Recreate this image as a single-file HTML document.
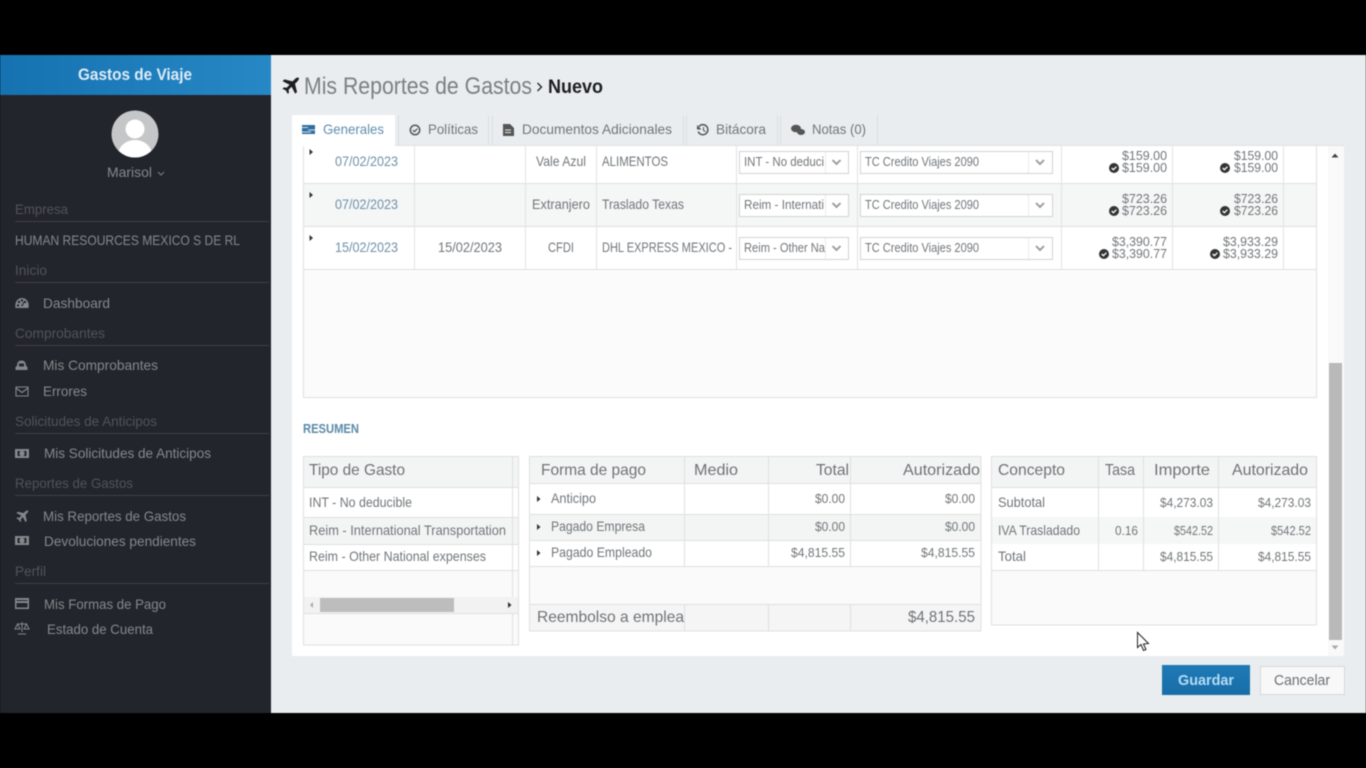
<!DOCTYPE html>
<html lang="es"><head><meta charset="utf-8"><title>Mis Reportes de Gastos</title>
<style>
html,body{margin:0;padding:0;background:#000;width:1366px;height:768px;overflow:hidden}
svg{display:block;filter:blur(.5px)}
text{font-family:"Liberation Sans",sans-serif;font-size:14px;fill:#72767a}
.s text{fill:#85888c}
.h text{fill:#50545a}
.d{fill:#6f91a8}
.t{font-size:16px;fill:#6f7377}
.a{font-size:13px;fill:#72767a}
</style></head><body>
<svg width="1366" height="768" viewBox="0 0 1366 768" xmlns="http://www.w3.org/2000/svg">
<defs>
<linearGradient id="hd" x1="0" x2="1" y1="0" y2="0"><stop offset="0" stop-color="#1672b0"/><stop offset="1" stop-color="#2788c6"/></linearGradient>
<linearGradient id="gb" x1="0" x2="0" y1="0" y2="1"><stop offset="0" stop-color="#1f7ab6"/><stop offset="1" stop-color="#186da7"/></linearGradient>
<clipPath id="av"><circle cx="135" cy="134" r="23.500"/></clipPath>
</defs>
<rect width="1366" height="768" fill="#000"/>
<rect x="270" y="55" width="1096" height="658" fill="#e9edef"/>
<rect x="0" y="55" width="271" height="658" fill="#22252b"/>
<rect x="0" y="55" width="271" height="40" fill="url(#hd)"/>
<text x="78" y="80" textLength="114" lengthAdjust="spacingAndGlyphs" style="font-size:17px;font-weight:bold;fill:#dcebf6">Gastos de Viaje</text>

<circle cx="135" cy="134" r="23.500" fill="#c5c6c7"/>
<g clip-path="url(#av)" fill="#fff"><circle cx="135" cy="129" r="9.500"/><ellipse cx="135" cy="155" rx="17" ry="15"/></g>

<g class="s">
<text x="107" y="177" textLength="45" lengthAdjust="spacingAndGlyphs">Marisol</text>
<text x="15" y="245" textLength="225" lengthAdjust="spacingAndGlyphs">HUMAN RESOURCES MEXICO S DE RL</text>
<text x="43" y="308" textLength="67" lengthAdjust="spacingAndGlyphs">Dashboard</text>
<text x="43" y="370" textLength="115" lengthAdjust="spacingAndGlyphs">Mis Comprobantes</text>
<text x="43" y="396" textLength="44" lengthAdjust="spacingAndGlyphs">Errores</text>
<text x="44" y="458" textLength="167" lengthAdjust="spacingAndGlyphs">Mis Solicitudes de Anticipos</text>
<text x="43" y="521" textLength="143" lengthAdjust="spacingAndGlyphs">Mis Reportes de Gastos</text>
<text x="44" y="546" textLength="152" lengthAdjust="spacingAndGlyphs">Devoluciones pendientes</text>
<text x="44" y="609" textLength="122" lengthAdjust="spacingAndGlyphs">Mis Formas de Pago</text>
<text x="47" y="634" textLength="106" lengthAdjust="spacingAndGlyphs">Estado de Cuenta</text>
</g>
<path d="M158 172l3 3 3-3" fill="none" stroke="#7d8084" stroke-width="1"/>
<g class="h">
<text x="15" y="214" textLength="53" lengthAdjust="spacingAndGlyphs">Empresa</text>
<text x="15" y="275" textLength="32" lengthAdjust="spacingAndGlyphs">Inicio</text>
<text x="15" y="338" textLength="90" lengthAdjust="spacingAndGlyphs">Comprobantes</text>
<text x="15" y="426" textLength="142" lengthAdjust="spacingAndGlyphs">Solicitudes de Anticipos</text>
<text x="15" y="488" textLength="118" lengthAdjust="spacingAndGlyphs">Reportes de Gastos</text>
<text x="15" y="576" textLength="31" lengthAdjust="spacingAndGlyphs">Perfil</text>
</g>
<g stroke="#3d4147" stroke-width="1"><path d="M15 221.500H269M15 282.500H269M15 345.500H269M15 433.500H269M15 495.500H269M15 583.500H269"/></g>

<!-- sidebar icons -->
<g fill="#85888c">
<path d="M15.500 308c-1-6 2-10 6.500-10s7.500 4 6.500 10z"/>
<g fill="#22252b"><circle cx="19" cy="302" r="1.200"/><circle cx="22" cy="300.500" r="1.200"/><circle cx="25" cy="302" r="1.200"/><circle cx="18" cy="305.500" r="1.200"/><path d="M21 306l2.500-4 .8.500-1.800 3.800z"/></g>
<path d="M17 366c0-4 2-5.500 4.500-5.500s4.500 1.500 4.500 5.500l1.500 1v3h-12v-3z"/>
<path d="M19 363.500h5v3h-5z" fill="#22252b"/>
<path d="M16 387h12v9h-12z" fill="none" stroke="#85888c" stroke-width="1.100"/><path d="M16 388l6 4.500 6-4.500" fill="none" stroke="#85888c" stroke-width="1.100"/>
<path d="M15 449h14v9h-14zm2.500 2v5h9v-5z" fill-rule="evenodd"/><circle cx="22" cy="453.500" r="2.700"/>
<path d="M15 536h14v9h-14zm2.500 2v5h9v-5z" fill-rule="evenodd"/><circle cx="22" cy="540.500" r="2.700"/>
<path transform="translate(16,510) scale(.72)" d="M16.500.5c.8.800.3 2.500-1 3.800L13 6.800l2 8.200-1.800 1.800-3.600-7-3 3 .4 2.800-1.300 1.300-1.800-3.400-3.400-1.800 1.300-1.300 2.800.4 3-3-7-3.600 1.800-1.800 8.200 2 2.500-2.500c1.300-1.300 3-1.800 3.800-1z"/>
<path d="M15 598h14v11h-14zm1.500 5v4.500h11V603zm0-3v1h11v-1z" fill-rule="evenodd"/>
<path d="M22 622v10M17 624h10M15 629l2.500-5 2.500 5zM24 629l2.500-5 2.500 5zM18 634h8" fill="none" stroke="#85888c" stroke-width="1"/>
</g>

<!-- title -->
<path fill="#1c1e20" transform="translate(282,77)" d="M16.500.5c.8.800.3 2.500-1 3.800L13 6.800l2 8.200-1.800 1.800-3.600-7-3 3 .4 2.800-1.300 1.300-1.800-3.400-3.400-1.800 1.300-1.300 2.800.4 3-3-7-3.600 1.800-1.800 8.200 2 2.500-2.500c1.300-1.300 3-1.800 3.800-1z"/>
<text x="304" y="94" textLength="228" lengthAdjust="spacingAndGlyphs" style="font-size:24px;fill:#7b8085">Mis Reportes de Gastos</text>
<path d="M537.500 83l4 4-4 4" fill="none" stroke="#222" stroke-width="1.300"/>
<text x="548" y="93" textLength="55" lengthAdjust="spacingAndGlyphs" style="font-size:19px;font-weight:bold;fill:#1c1e20">Nuevo</text>

<!-- tabs -->
<rect x="292" y="115" width="103" height="31" fill="#fff"/>
<path d="M398.500 115.500v30M488.500 115.500v30M492.500 115.500v30M683.500 115.500v30M686.500 115.500v30M777.500 115.500v30M780.500 115.500v30M877.500 115.500v30" fill="none" stroke="#dadddf"/>
<path d="M395 145.500H1344" stroke="#dfe2e4"/>
<path d="M302 125h13v9h-13z" fill="#2f6f9e"/><path d="M302 127.500h6M308 130h7M302 132h9" stroke="#cfe0ec" stroke-width="1"/>
<text x="323" y="134" textLength="61" lengthAdjust="spacingAndGlyphs" style="fill:#5f8eae">Generales</text>
<circle cx="415" cy="130" r="4.700" fill="none" stroke="#555" stroke-width="1.500"/><path d="M412.800 130l1.700 1.700 2.800-3" fill="none" stroke="#555" stroke-width="1.200"/>
<text x="428" y="134" textLength="50" lengthAdjust="spacingAndGlyphs">Políticas</text>
<path d="M503 124h7l4 4v8h-11z" fill="#555"/><path d="M505 130h6M505 132.500h6" stroke="#e4e8ea"/>
<text x="522" y="134" textLength="150" lengthAdjust="spacingAndGlyphs">Documentos Adicionales</text>
<path d="M699 126.500a5 5 0 1 1-.800 5" fill="none" stroke="#555" stroke-width="1.500"/><path d="M697 125v4.500h4.500z" fill="#555"/><path d="M703.500 127v3.500l2 1" fill="none" stroke="#555"/>
<text x="716" y="134" textLength="50" lengthAdjust="spacingAndGlyphs">Bitácora</text>
<ellipse cx="796" cy="128.500" rx="5" ry="3.700" fill="#555"/><ellipse cx="801" cy="132" rx="4" ry="3" fill="#555"/>
<text x="812" y="134" textLength="54" lengthAdjust="spacingAndGlyphs">Notas (0)</text>

<!-- panel -->
<rect x="292" y="146" width="1052" height="510" fill="#fff"/>
<rect x="303" y="183" width="1013" height="43" fill="#f5f6f6"/>
<rect x="303" y="270" width="1013" height="127" fill="#fbfbfb"/>
<path d="M303.500 146v252M1316.500 146v252M303 183.500h1013M303 226.500h1013M303 269.500h1013M303 397.500h1013" stroke="#e0e0e0" fill="none"/>
<path d="M414.500 146v123M525.500 146v123M596.500 146v123M736.500 146v123M857.500 146v123M1061.500 146v123M1172.500 146v123M1283.500 146v123" stroke="#e2e2e2"/>

<!-- scrollbar -->
<rect x="1328" y="146" width="16" height="510" fill="#f9f9f9"/>
<rect x="1329" y="363" width="13" height="277" fill="#b9b9b9"/>
<path d="M1331.500 157.500l3.500-4 3.500 4z" fill="#444"/><path d="M1331.500 645.500l3.500 4 3.500-4z" fill="#aaa"/>

<!-- row arrows -->
<g fill="#333"><path d="M309.500 149v6l3.500-3z"/><path d="M309.500 192v6l3.500-3z"/><path d="M309.500 235v6l3.500-3z"/></g>

<!-- rows -->
<text class="d" x="335" y="166" textLength="63" lengthAdjust="spacingAndGlyphs">07/02/2023</text>
<text class="d" x="335" y="209" textLength="63" lengthAdjust="spacingAndGlyphs">07/02/2023</text>
<text class="d" x="335" y="252" textLength="63" lengthAdjust="spacingAndGlyphs">15/02/2023</text>
<text x="438" y="252" textLength="64" lengthAdjust="spacingAndGlyphs">15/02/2023</text>
<text x="536" y="166" textLength="50" lengthAdjust="spacingAndGlyphs">Vale Azul</text>
<text x="532" y="209" textLength="58" lengthAdjust="spacingAndGlyphs">Extranjero</text>
<text x="548" y="252" textLength="26" lengthAdjust="spacingAndGlyphs">CFDI</text>
<text x="602" y="166" textLength="66" lengthAdjust="spacingAndGlyphs">ALIMENTOS</text>
<text x="602" y="209" textLength="82" lengthAdjust="spacingAndGlyphs">Traslado Texas</text>
<text x="602" y="252" textLength="130" lengthAdjust="spacingAndGlyphs">DHL EXPRESS MEXICO -</text>

<!-- selects -->
<g fill="#fff" stroke="#d2d2d2">
<rect x="739.500" y="151.500" width="109" height="22"/><rect x="860.500" y="151.500" width="192" height="22"/>
<rect x="739.500" y="194.500" width="109" height="22"/><rect x="860.500" y="194.500" width="192" height="22"/>
<rect x="739.500" y="237.500" width="109" height="22"/><rect x="860.500" y="237.500" width="192" height="22"/>
</g>
<path d="M825.500 152v21M1028.500 152v21M825.500 195v21M1028.500 195v21M825.500 238v21M1028.500 238v21" stroke="#ececec"/>
<g fill="none" stroke="#9a9a9a" stroke-width="1.900">
<path d="M832.500 160l4 4 4-4M1036 160l4 4 4-4M832.500 203l4 4 4-4M1036 203l4 4 4-4M832.500 246l4 4 4-4M1036 246l4 4 4-4"/>
</g>
<text class="a" x="744" y="166" textLength="80" lengthAdjust="spacingAndGlyphs">INT - No deduci</text>
<text class="a" x="744" y="209" textLength="80" lengthAdjust="spacingAndGlyphs">Reim - Internati</text>
<text class="a" x="744" y="252" textLength="81" lengthAdjust="spacingAndGlyphs">Reim - Other Na</text>
<text class="a" x="865" y="166" textLength="114" lengthAdjust="spacingAndGlyphs">TC Credito Viajes 2090</text>
<text class="a" x="865" y="209" textLength="114" lengthAdjust="spacingAndGlyphs">TC Credito Viajes 2090</text>
<text class="a" x="865" y="252" textLength="114" lengthAdjust="spacingAndGlyphs">TC Credito Viajes 2090</text>

<!-- amounts -->
<text class="a" x="1122" y="160" textLength="45" lengthAdjust="spacingAndGlyphs">$159.00</text>
<text class="a" x="1122" y="172" textLength="45" lengthAdjust="spacingAndGlyphs">$159.00</text>
<text class="a" x="1234" y="160" textLength="44" lengthAdjust="spacingAndGlyphs">$159.00</text>
<text class="a" x="1234" y="172" textLength="44" lengthAdjust="spacingAndGlyphs">$159.00</text>
<text class="a" x="1122" y="203" textLength="45" lengthAdjust="spacingAndGlyphs">$723.26</text>
<text class="a" x="1122" y="215" textLength="45" lengthAdjust="spacingAndGlyphs">$723.26</text>
<text class="a" x="1234" y="203" textLength="44" lengthAdjust="spacingAndGlyphs">$723.26</text>
<text class="a" x="1234" y="215" textLength="44" lengthAdjust="spacingAndGlyphs">$723.26</text>
<text class="a" x="1112" y="246" textLength="55" lengthAdjust="spacingAndGlyphs">$3,390.77</text>
<text class="a" x="1112" y="258" textLength="55" lengthAdjust="spacingAndGlyphs">$3,390.77</text>
<text class="a" x="1223" y="246" textLength="55" lengthAdjust="spacingAndGlyphs">$3,933.29</text>
<text class="a" x="1223" y="258" textLength="55" lengthAdjust="spacingAndGlyphs">$3,933.29</text>
<g fill="#333"><circle cx="1114" cy="168" r="5"/><circle cx="1225" cy="168" r="5"/><circle cx="1114" cy="211" r="5"/><circle cx="1225" cy="211" r="5"/><circle cx="1104" cy="254" r="5"/><circle cx="1215" cy="254" r="5"/></g>
<g fill="none" stroke="#fff" stroke-width="1.300"><path d="M1111.700 168l1.700 1.700 3-3M1222.700 168l1.700 1.700 3-3M1111.700 211l1.700 1.700 3-3M1222.700 211l1.700 1.700 3-3M1101.700 254l1.700 1.700 3-3M1212.700 254l1.700 1.700 3-3"/></g>

<text x="303" y="433" textLength="56" lengthAdjust="spacingAndGlyphs" style="font-size:13px;font-weight:bold;fill:#5b8aa8">RESUMEN</text>

<!-- Table 1 -->
<rect x="303" y="456" width="216" height="31" fill="#f3f4f4"/>
<rect x="303" y="517" width="216" height="27" fill="#f3f4f4"/>
<rect x="303" y="570" width="216" height="75" fill="#fafafa"/>
<rect x="303" y="597" width="216" height="16" fill="#f2f2f2"/>
<rect x="320" y="598" width="134" height="14" fill="#bdbdbd"/>
<path d="M313 602v6l-3-3z" fill="#aaa"/><path d="M508 602v6l3.500-3z" fill="#333"/>
<path d="M303.500 456v189M518.500 456v189M512.500 456v141M512.500 613v32M303 456.500h216M303 487.500h216M303 517.500h216M303 544.500h216M303 570.500h216M303 613.500h216M303 645h216" stroke="#e0e0e0" fill="none"/>
<text class="t" x="309" y="475" textLength="96" lengthAdjust="spacingAndGlyphs">Tipo de Gasto</text>
<text x="309" y="507" textLength="103" lengthAdjust="spacingAndGlyphs">INT - No deducible</text>
<text x="309" y="535" textLength="197" lengthAdjust="spacingAndGlyphs">Reim - International Transportation</text>
<text x="309" y="561" textLength="177" lengthAdjust="spacingAndGlyphs">Reim - Other National expenses</text>

<!-- Table 2 -->
<rect x="529" y="456" width="452" height="27" fill="#f3f4f4"/>
<rect x="529" y="514" width="452" height="26" fill="#f3f4f4"/>
<rect x="529" y="566" width="452" height="38" fill="#fafafa"/>
<rect x="529" y="604" width="452" height="27" fill="#f5f5f5"/>
<path d="M529.500 456v175M981 456v175M529 456.500h452M529 483.500h452M529 514.500h452M529 540.500h452M529 566.500h452M529 604.500h452M529 631h452M684.500 456v110M768.500 456v110M850.500 456v110M684.500 604v27M768.500 604v27M850.500 604v27" stroke="#e0e0e0" fill="none"/>
<text class="t" x="541" y="475" textLength="105" lengthAdjust="spacingAndGlyphs">Forma de pago</text>
<text class="t" x="694" y="475" textLength="44" lengthAdjust="spacingAndGlyphs">Medio</text>
<text class="t" x="816" y="475" textLength="33" lengthAdjust="spacingAndGlyphs">Total</text>
<text class="t" x="903" y="475" textLength="77" lengthAdjust="spacingAndGlyphs">Autorizado</text>
<g fill="#333"><path d="M537 496v6l3.500-3z"/><path d="M537 524v6l3.500-3z"/><path d="M537 550v6l3.500-3z"/></g>
<text x="551" y="503" textLength="45" lengthAdjust="spacingAndGlyphs">Anticipo</text>
<text x="551" y="531" textLength="94" lengthAdjust="spacingAndGlyphs">Pagado Empresa</text>
<text x="551" y="557" textLength="101" lengthAdjust="spacingAndGlyphs">Pagado Empleado</text>
<text class="a" x="815" y="503" textLength="30" lengthAdjust="spacingAndGlyphs">$0.00</text>
<text class="a" x="945" y="503" textLength="30" lengthAdjust="spacingAndGlyphs">$0.00</text>
<text class="a" x="815" y="531" textLength="30" lengthAdjust="spacingAndGlyphs">$0.00</text>
<text class="a" x="945" y="531" textLength="30" lengthAdjust="spacingAndGlyphs">$0.00</text>
<text class="a" x="791" y="557" textLength="54" lengthAdjust="spacingAndGlyphs">$4,815.55</text>
<text class="a" x="921" y="557" textLength="54" lengthAdjust="spacingAndGlyphs">$4,815.55</text>
<text class="t" x="537" y="622" textLength="147" lengthAdjust="spacingAndGlyphs">Reembolso a emplea</text>
<text class="t" x="908" y="622" textLength="67" lengthAdjust="spacingAndGlyphs">$4,815.55</text>

<!-- Table 3 -->
<rect x="991" y="456" width="325" height="31" fill="#f3f4f4"/>
<rect x="991" y="517" width="325" height="27" fill="#f5f6f6"/>
<rect x="991" y="570" width="325" height="55" fill="#fafafa"/>
<path d="M991.500 456v169M1316.500 456v169M991 456.500h325M991 487.500h325M991 570.500h325M991 625h325M1098.500 456v114M1143.500 456v114M1218.500 456v114" stroke="#e0e0e0" fill="none"/>
<text class="t" x="998" y="475" textLength="67" lengthAdjust="spacingAndGlyphs">Concepto</text>
<text class="t" x="1105" y="475" textLength="30" lengthAdjust="spacingAndGlyphs">Tasa</text>
<text class="t" x="1154" y="475" textLength="56" lengthAdjust="spacingAndGlyphs">Importe</text>
<text class="t" x="1232" y="475" textLength="76" lengthAdjust="spacingAndGlyphs">Autorizado</text>
<text x="998" y="507" textLength="47" lengthAdjust="spacingAndGlyphs">Subtotal</text>
<text x="998" y="535" textLength="82" lengthAdjust="spacingAndGlyphs">IVA Trasladado</text>
<text x="998" y="561" textLength="28" lengthAdjust="spacingAndGlyphs">Total</text>
<text class="a" x="1115" y="535" textLength="23" lengthAdjust="spacingAndGlyphs">0.16</text>
<text class="a" x="1160" y="507" textLength="53" lengthAdjust="spacingAndGlyphs">$4,273.03</text>
<text class="a" x="1258" y="507" textLength="53" lengthAdjust="spacingAndGlyphs">$4,273.03</text>
<text class="a" x="1174" y="535" textLength="39" lengthAdjust="spacingAndGlyphs">$542.52</text>
<text class="a" x="1271" y="535" textLength="40" lengthAdjust="spacingAndGlyphs">$542.52</text>
<text class="a" x="1160" y="561" textLength="53" lengthAdjust="spacingAndGlyphs">$4,815.55</text>
<text class="a" x="1258" y="561" textLength="53" lengthAdjust="spacingAndGlyphs">$4,815.55</text>

<!-- cursor -->
<path d="M1137.500 632.500v15l3.500-3 2.500 6 2.500-1-2.500-5.500 5-.5z" fill="#fff" stroke="#222" stroke-width="1"/>

<!-- buttons -->
<rect x="1162" y="665" width="88" height="30" fill="url(#gb)"/>
<text x="1178" y="685" textLength="56" lengthAdjust="spacingAndGlyphs" style="font-size:15px;font-weight:bold;fill:#b5dcf5">Guardar</text>
<rect x="1260.500" y="666.500" width="84" height="28" fill="#f8f8f8" stroke="#d8d8d8"/>
<text x="1274" y="685" textLength="56" lengthAdjust="spacingAndGlyphs" style="font-size:15px;fill:#6b6f73">Cancelar</text>
</svg>
</body></html>
